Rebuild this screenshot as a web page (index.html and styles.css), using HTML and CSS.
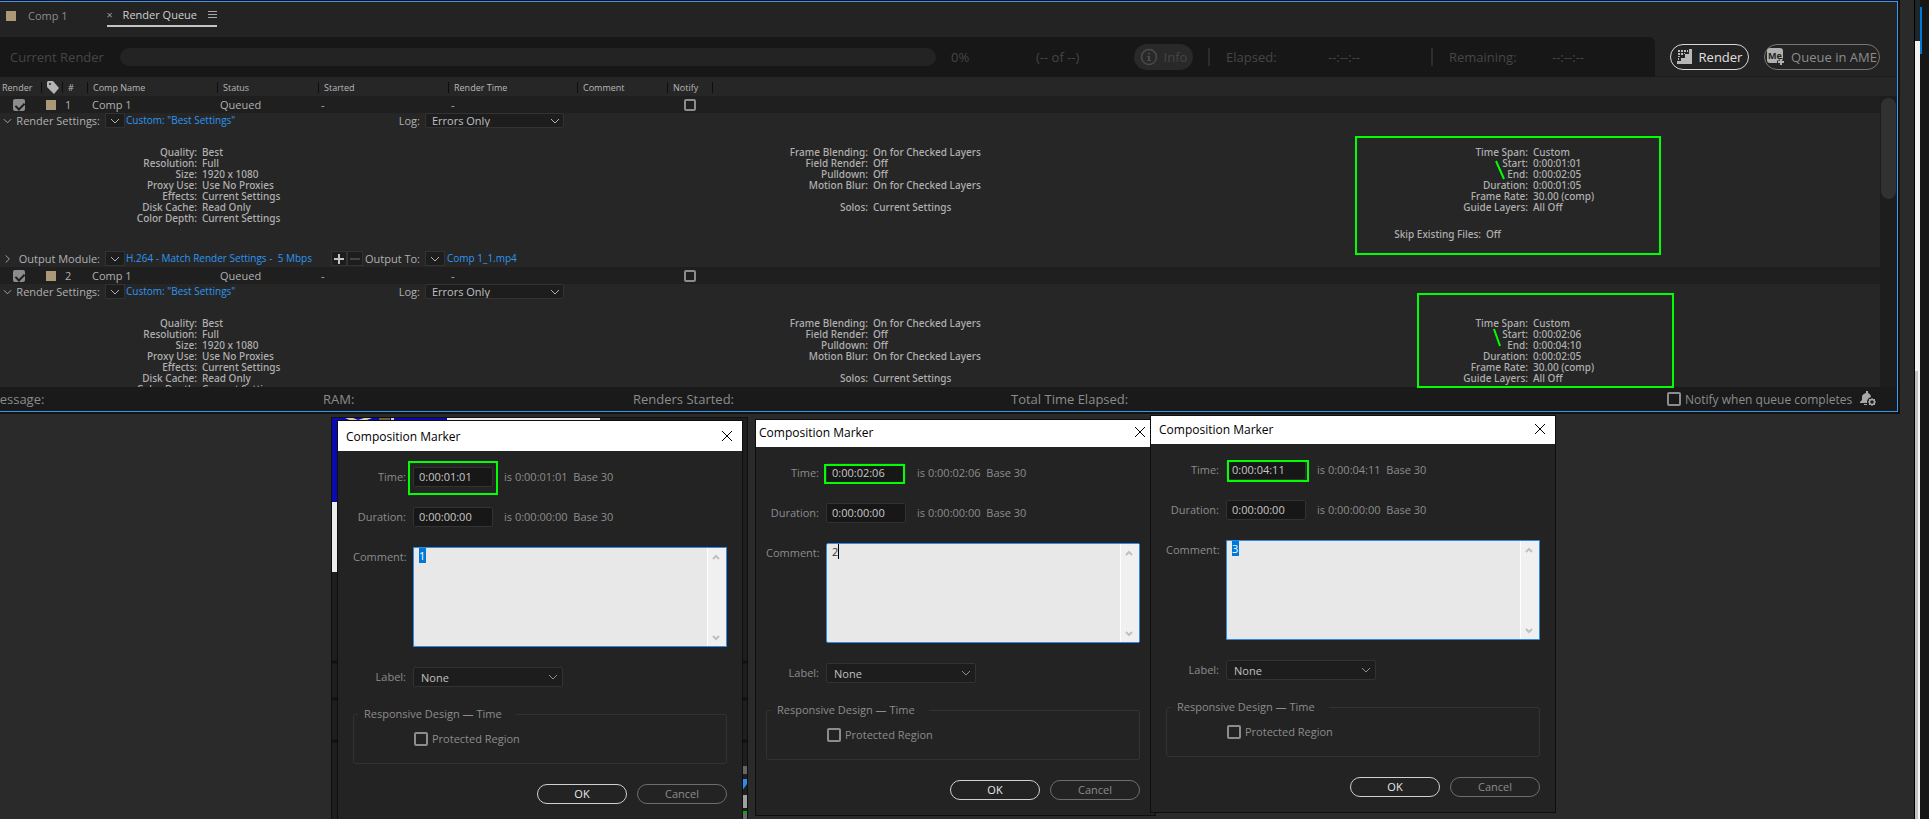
FILE: index.html
```
<!DOCTYPE html>
<html lang="en">
<head>
  <meta charset="UTF-8" />
  <meta name="viewport" content="width=device-width, initial-scale=1.0" />
  <title>Render Queue</title>
  <link rel="stylesheet" href="styles.css">
</head>
<body>
  <svg class="symbols" aria-hidden="true">
    <symbol id="chevron" viewBox="0 0 10 6"><path d="M1 1l4 4 4-4" fill="none" stroke="currentColor"/></symbol>
    <symbol id="close" viewBox="0 0 12 12"><path d="M1 1l10 10M11 1L1 11" fill="none" stroke="currentColor"/></symbol>
    <symbol id="scroll-arrow" viewBox="0 0 8 6"><path d="M1 5l3-3 3 3" fill="none" stroke="currentColor" stroke-width="2"/></symbol>
  </svg>

  <div class="workspace">
    <main class="panel">
      <nav class="tabs">
        <a href="#" class="tab"><span class="swatch"></span>Comp 1</a>
        <a href="#" class="tab active">
          <span class="tab-close">×</span>Render Queue
          <svg class="menu-icon" width="9" height="9"><path d="M0 1.500h9M0 4.500h9M0 7.500h9" stroke="#a8a8a8"/></svg>
        </a>
      </nav>

      <div class="render-bar">
        <div class="status">
          <span class="status-title">Current Render</span>
          <div class="progress"></div>
          <span class="percent">0%</span>
          <span class="count">(-- of --)</span>
          <button class="info-btn" disabled>
            <svg width="18" height="18"><circle cx="9" cy="9" r="7.500" fill="none" stroke="#4b4b4b" stroke-width="1.500"/><path d="M8 5h2v1.500H8zM7 8h3v4h1v1H7v-1h1V9H7z" fill="#4b4b4b"/></svg>
            Info
          </button>
          <span class="elapsed">Elapsed:</span>
          <span class="clock">--:--:--</span>
          <span class="remaining">Remaining:</span>
          <span class="clock last">--:--:--</span>
        </div>
        <button class="pill render-btn">
          <svg width="16" height="16" viewBox="0 0 16 16" fill="#b8b8b8"><path d="M12 0h3v15H0v-3h4V9h4V5h4z"/><path d="M1 1h2v2H1zM4 1h2v2H4zM7 1h2v2H7zM10 1h1v2h-1zM1 4h2v2H1zM4 4h2v2H4zM7 4h1v1H7zM1 7h2v1H1zM1 9h1v2H1z"/></svg>
          Render
        </button>
        <button class="pill ame-btn">
          <svg width="18" height="18" viewBox="0 0 18 18"><rect width="16" height="15" rx="3" fill="#b0b0b0"/><text x="1" y="11" class="me-text">Me</text><path d="M14 10v8M10 14h8" stroke="#232323" stroke-width="3"/><path d="M14 11v6M11 14h6" stroke="#b0b0b0" stroke-width="2"/></svg>
          Queue in AME
        </button>
      </div>

      <table class="queue-head">
        <colgroup><col class="c-render"><col class="c-tag"><col class="c-num"><col class="c-name"><col class="c-status"><col class="c-started"><col class="c-time"><col class="c-comment"><col class="c-notify"><col></colgroup>
        <thead>
          <tr>
            <th>Render</th>
            <th><svg width="12" height="13" viewBox="0 0 12 13"><path d="M0 1l1-1h5l6 7-5 6L0 6zM3 2a1 1 0 100 2 1 1 0 000-2z" fill="#b4b4b4" fill-rule="evenodd"/></svg></th>
            <th>#</th>
            <th>Comp Name</th>
            <th>Status</th>
            <th>Started</th>
            <th>Render Time</th>
            <th>Comment</th>
            <th>Notify</th>
            <th></th>
          </tr>
        </thead>
      </table>

      <div class="queue-scroll">
        <div class="queue-list">
          <!-- item 1 -->
          <table class="queue-item">
            <colgroup><col class="c-render"><col class="c-tag"><col class="c-num"><col class="c-name"><col class="c-status"><col class="c-started"><col class="c-time"><col class="c-comment"><col class="c-notify"><col></colgroup>
            <tr>
              <td><input type="checkbox" class="check render-check" aria-label="Render" checked></td>
              <td><span class="swatch"></span></td>
              <td>1</td>
              <td>Comp 1</td>
              <td>Queued</td>
              <td>-</td>
              <td>-</td>
              <td></td>
              <td><input type="checkbox" class="check notify-check" aria-label="Notify"></td>
              <td></td>
            </tr>
          </table>
          <div class="line">
            <button class="twisty" aria-label="Collapse"><svg width="9" height="6"><use href="#chevron"/></svg></button>
            <span class="line-label">Render Settings:</span>
            <button class="drop" aria-label="Render settings templates"><svg width="10" height="6"><use href="#chevron"/></svg></button>
            <a href="#">Custom: "Best Settings"</a>
            <label class="line-label log-label" for="log1">Log:</label>
            <div class="select"><select id="log1"><option>Errors Only</option></select><svg width="10" height="6"><use href="#chevron"/></svg></div>
          </div>
          <div class="details">
            <dl>
              <dt>Quality:</dt><dd>Best</dd>
              <dt>Resolution:</dt><dd>Full</dd>
              <dt>Size:</dt><dd>1920 x 1080</dd>
              <dt>Proxy Use:</dt><dd>Use No Proxies</dd>
              <dt>Effects:</dt><dd>Current Settings</dd>
              <dt>Disk Cache:</dt><dd>Read Only</dd>
              <dt>Color Depth:</dt><dd>Current Settings</dd>
            </dl>
            <dl>
              <dt>Frame Blending:</dt><dd>On for Checked Layers</dd>
              <dt>Field Render:</dt><dd>Off</dd>
              <dt>Pulldown:</dt><dd>Off</dd>
              <dt>Motion Blur:</dt><dd>On for Checked Layers</dd>
              <dt class="after-gap">Solos:</dt><dd class="after-gap">Current Settings</dd>
            </dl>
            <div>
              <dl>
                <dt>Time Span:</dt><dd>Custom</dd>
                <dt>Start:</dt><dd>0:00:01:01</dd>
                <dt>End:</dt><dd>0:00:02:05</dd>
                <dt>Duration:</dt><dd>0:00:01:05</dd>
                <dt>Frame Rate:</dt><dd>30.00 (comp)</dd>
                <dt>Guide Layers:</dt><dd>All Off</dd>
              </dl>
              <dl class="skip"><dt>Skip Existing Files:</dt><dd>Off</dd></dl>
            </div>
          </div>
          <div class="line">
            <button class="twisty closed" aria-label="Expand"><svg width="9" height="6"><use href="#chevron"/></svg></button>
            <span class="line-label">Output Module:</span>
            <button class="drop" aria-label="Output module templates"><svg width="10" height="6"><use href="#chevron"/></svg></button>
            <a href="#">H.264 - Match Render Settings -&nbsp; 5 Mbps</a>
            <div class="add-remove">
              <button aria-label="Add output module"><svg width="10" height="10"><path d="M5 0v10M0 5h10" stroke="#c4c4c4" stroke-width="2"/></svg></button>
              <button aria-label="Remove output module"><svg width="10" height="10"><path d="M0 5h10" stroke="#444" stroke-width="2"/></svg></button>
            </div>
            <span class="line-label">Output To:</span>
            <div class="output-to">
              <button class="drop" aria-label="Output name templates"><svg width="10" height="6"><use href="#chevron"/></svg></button>
              <a href="#">Comp 1_1.mp4</a>
            </div>
          </div>

          <!-- item 2 -->
          <table class="queue-item">
            <colgroup><col class="c-render"><col class="c-tag"><col class="c-num"><col class="c-name"><col class="c-status"><col class="c-started"><col class="c-time"><col class="c-comment"><col class="c-notify"><col></colgroup>
            <tr>
              <td><input type="checkbox" class="check render-check" aria-label="Render" checked></td>
              <td><span class="swatch"></span></td>
              <td>2</td>
              <td>Comp 1</td>
              <td>Queued</td>
              <td>-</td>
              <td>-</td>
              <td></td>
              <td><input type="checkbox" class="check notify-check" aria-label="Notify"></td>
              <td></td>
            </tr>
          </table>
          <div class="line">
            <button class="twisty" aria-label="Collapse"><svg width="9" height="6"><use href="#chevron"/></svg></button>
            <span class="line-label">Render Settings:</span>
            <button class="drop" aria-label="Render settings templates"><svg width="10" height="6"><use href="#chevron"/></svg></button>
            <a href="#">Custom: "Best Settings"</a>
            <label class="line-label log-label" for="log2">Log:</label>
            <div class="select"><select id="log2"><option>Errors Only</option></select><svg width="10" height="6"><use href="#chevron"/></svg></div>
          </div>
          <div class="details">
            <dl>
              <dt>Quality:</dt><dd>Best</dd>
              <dt>Resolution:</dt><dd>Full</dd>
              <dt>Size:</dt><dd>1920 x 1080</dd>
              <dt>Proxy Use:</dt><dd>Use No Proxies</dd>
              <dt>Effects:</dt><dd>Current Settings</dd>
              <dt>Disk Cache:</dt><dd>Read Only</dd>
              <dt>Color Depth:</dt><dd>Current Settings</dd>
            </dl>
            <dl>
              <dt>Frame Blending:</dt><dd>On for Checked Layers</dd>
              <dt>Field Render:</dt><dd>Off</dd>
              <dt>Pulldown:</dt><dd>Off</dd>
              <dt>Motion Blur:</dt><dd>On for Checked Layers</dd>
              <dt class="after-gap">Solos:</dt><dd class="after-gap">Current Settings</dd>
            </dl>
            <dl>
              <dt>Time Span:</dt><dd>Custom</dd>
              <dt>Start:</dt><dd>0:00:02:06</dd>
              <dt>End:</dt><dd>0:00:04:10</dd>
              <dt>Duration:</dt><dd>0:00:02:05</dd>
              <dt>Frame Rate:</dt><dd>30.00 (comp)</dd>
              <dt>Guide Layers:</dt><dd>All Off</dd>
            </dl>
          </div>
        </div>
        <div class="scrollbar"><div class="thumb"></div></div>
      </div>

      <footer class="summary">
        <span>Message:</span>
        <span>RAM:</span>
        <span>Renders Started:</span>
        <span>Total Time Elapsed:</span>
        <div class="notify">
          <input type="checkbox" class="check" id="notifyAll"><label for="notifyAll">Notify when queue completes</label>
          <svg width="17" height="16" viewBox="0 0 17 16"><path d="M6 0h2v2c2 1 3 2 3 5l-2 2v3H0v-1l2-2V6c0-2 1-3 4-4zM4 13h3v1H4z" fill="#a8a8a8"/><circle cx="12" cy="11" r="5" fill="#1a1a1a"/><circle cx="12" cy="11" r="2.500" fill="none" stroke="#a8a8a8" stroke-width="1.500"/><path d="M12 7v1M12 14v1M8 11h1M15 11h1M9 8l1 1M14 13l1 1M15 8l-1 1M10 13l-1 1" stroke="#a8a8a8"/></svg>
        </div>
      </footer>
    </main>

    <!-- viewer and timeline peeking out behind the dialogs -->
    <svg class="backdrop" width="820" height="407">
      <rect x="0" y="4" width="417" height="403" fill="#0e0e0e"/>
      <rect x="1" y="5" width="415" height="402" fill="#1e1e1e"/>
      <path d="M1 5h115v5H6v79H1z" fill="#0a0ab4"/>
      <path d="M14 5h8l5 2 6-2h8l-10 4h-8zM60 5h3v4h-3z" fill="#d8d0b8"/>
      <path d="M48 5h11v4H48z" fill="#6b6040"/>
      <path d="M116 5h153v4H116zM1 89h5v70H1z" fill="#ececec"/>
      <path d="M1 249h415M1 286h415M1 328h415" stroke="#111" stroke-width="3"/>
      <path d="M411 353h5v8h-5z" fill="#666"/>
      <path d="M411 366h5v5l-5 7z" fill="#2d8ceb"/>
      <path d="M411 382h5v13h-5z" fill="#a0a0a0"/>
      <path d="M411 398h5v3h-5z" fill="#13a313"/>
      <path d="M411 401h5v6h-5z" fill="#667"/>
    </svg>

    <section class="window window-one">
      <div class="window-body">
        <header class="titlebar"><h2>Composition Marker</h2><button aria-label="Close"><svg width="12" height="12"><use href="#close"/></svg></button></header>
        <form class="marker-form">
          <label for="time1">Time:</label>
          <div class="field"><input type="text" id="time1" value="0:00:01:01"><span>is 0:00:01:01&nbsp; Base 30</span></div>
          <label for="duration1">Duration:</label>
          <div class="field"><input type="text" id="duration1" value="0:00:00:00"><span>is 0:00:00:00&nbsp; Base 30</span></div>
          <label for="comment1">Comment:</label>
          <div class="comment selected"><textarea id="comment1">1</textarea><div class="arrows"><svg width="8" height="6"><use href="#scroll-arrow"/></svg><svg width="8" height="6"><use href="#scroll-arrow"/></svg></div></div>
          <label for="label1">Label:</label>
          <div class="select"><select id="label1"><option>None</option></select><svg width="10" height="6"><use href="#chevron"/></svg></div>
          <fieldset>
            <legend>Responsive Design — Time</legend>
            <input type="checkbox" class="check" id="protected1"><label for="protected1">Protected Region</label>
          </fieldset>
          <div class="actions"><button type="button" class="ok">OK</button><button type="button">Cancel</button></div>
        </form>
      </div>
    </section>

    <section class="window window-two">
      <div class="window-body">
        <header class="titlebar"><h2>Composition Marker</h2><button aria-label="Close"><svg width="12" height="12"><use href="#close"/></svg></button></header>
        <form class="marker-form">
          <label for="time2">Time:</label>
          <div class="field"><input type="text" id="time2" value="0:00:02:06"><span>is 0:00:02:06&nbsp; Base 30</span></div>
          <label for="duration2">Duration:</label>
          <div class="field"><input type="text" id="duration2" value="0:00:00:00"><span>is 0:00:00:00&nbsp; Base 30</span></div>
          <label for="comment2">Comment:</label>
          <div class="comment caret"><textarea id="comment2">2</textarea><div class="arrows"><svg width="8" height="6"><use href="#scroll-arrow"/></svg><svg width="8" height="6"><use href="#scroll-arrow"/></svg></div></div>
          <label for="label2">Label:</label>
          <div class="select"><select id="label2"><option>None</option></select><svg width="10" height="6"><use href="#chevron"/></svg></div>
          <fieldset>
            <legend>Responsive Design — Time</legend>
            <input type="checkbox" class="check" id="protected2"><label for="protected2">Protected Region</label>
          </fieldset>
          <div class="actions"><button type="button" class="ok">OK</button><button type="button">Cancel</button></div>
        </form>
      </div>
    </section>

    <section class="window window-three">
      <div class="window-body">
        <header class="titlebar"><h2>Composition Marker</h2><button aria-label="Close"><svg width="12" height="12"><use href="#close"/></svg></button></header>
        <form class="marker-form">
          <label for="time3">Time:</label>
          <div class="field"><input type="text" id="time3" value="0:00:04:11"><span>is 0:00:04:11&nbsp; Base 30</span></div>
          <label for="duration3">Duration:</label>
          <div class="field"><input type="text" id="duration3" value="0:00:00:00"><span>is 0:00:00:00&nbsp; Base 30</span></div>
          <label for="comment3">Comment:</label>
          <div class="comment selected"><textarea id="comment3">3</textarea><div class="arrows"><svg width="8" height="6"><use href="#scroll-arrow"/></svg><svg width="8" height="6"><use href="#scroll-arrow"/></svg></div></div>
          <label for="label3">Label:</label>
          <div class="select"><select id="label3"><option>None</option></select><svg width="10" height="6"><use href="#chevron"/></svg></div>
          <fieldset>
            <legend>Responsive Design — Time</legend>
            <input type="checkbox" class="check" id="protected3"><label for="protected3">Protected Region</label>
          </fieldset>
          <div class="actions"><button type="button" class="ok">OK</button><button type="button">Cancel</button></div>
        </form>
      </div>
    </section>

    <!-- green highlight marks -->
    <svg class="marks" fill="none" stroke="#00ff00" stroke-width="2">
      <rect x="1356" y="137" width="304" height="117"/>
      <rect x="1418" y="294" width="255" height="93"/>
      <path d="M1496 161l8 18M1494 329l6 17"/>
      <rect x="409" y="462" width="88" height="32"/>
      <rect x="825" y="465" width="79" height="18"/>
      <rect x="1228" y="461" width="80" height="20"/>
    </svg>
  </div>

  <aside class="edge"><div class="edge-scroll"></div><div class="edge-accent"></div></aside>
</body>
</html>
```
FILE: styles.css
```
* {
  box-sizing: border-box;
}

body {
  margin: 0;
  display: flex;
  height: 100vh;
  overflow: hidden;
  background-color: #2a2a2a;
  color: #b0b0b0;
  font-family: "Open Sans", "Noto Sans", sans-serif;
  font-size: 11px;
}

button, input, select, textarea {
  margin: 0;
  font: inherit;
  color: inherit;
}

button {
  display: flex;
  align-items: center;
  justify-content: center;
  padding: 0;
  background: none;
  border: none;
}

a {
  color: #2d96f0;
  text-decoration: none;
}

svg {
  flex: none;
}

.symbols {
  position: absolute;
  width: 0;
  height: 0;
}

.workspace {
  position: relative;
  flex: 1;
  min-width: 0;
  background-color: #2a2a2a;
}

/* render queue panel */
.panel {
  margin: 1px 16px 0 0;
  background-color: #232323;
  border: 1px solid #3a96ee;
  border-left: none;
  box-shadow: 0 0 0 2px #121212;
}

.tabs {
  display: flex;
  gap: 39px;
  height: 35px;
  padding: 2px 0 0 6px;
}

.tab {
  display: flex;
  align-items: center;
  gap: 12px;
  height: 23px;
  color: #8c8c8c;
}

.tab.active {
  gap: 11px;
  color: #d0d0d0;
  border-bottom: 2px solid #c4c4c4;
}

.tab-close {
  width: 5px;
  color: #9a9a9a;
}

.swatch {
  display: block;
  width: 10px;
  height: 10px;
  background-color: #ab9877;
}

.render-bar {
  display: flex;
  align-items: center;
  height: 40px;
  padding-right: 17px;
  border-bottom: 1px solid #1c1c1c;
  font-size: 13px;
}

.status {
  display: flex;
  flex: 1;
  align-items: center;
  height: 40px;
  padding-left: 10px;
  background-color: #171717;
  border-radius: 0 6px 0 0;
  color: #464646;
  font-weight: 500;
}

.status-title {
  width: 110px;
}

.progress {
  flex: 1;
  height: 18px;
  border-radius: 9px;
  background-color: #232323;
}

.percent {
  width: 100px;
  padding-left: 15px;
}

.count {
  width: 98px;
}

.info-btn {
  gap: 6px;
  width: 59px;
  height: 26px;
  border-radius: 13px;
  background-color: #292929;
  color: #464646;
}

.elapsed, .remaining {
  height: 18px;
  padding-left: 16px;
  border-left: 2px solid #2c2c2c;
  line-height: 18px;
}

.elapsed {
  width: 120px;
  margin-left: 15px;
}

.remaining {
  width: 121px;
}

.clock {
  width: 103px;
}

.pill {
  gap: 6px;
  height: 26px;
  margin-left: 15px;
  border: 1px solid #767676;
  border-radius: 13px;
}

.render-btn {
  width: 79px;
  border-color: #d8d8d8;
  color: #e0e0e0;
}

.ame-btn {
  width: 116px;
  color: #8c8c8c;
}

.me-text {
  fill: #232323;
  font-size: 9px;
  font-weight: bold;
}

/* queue tables */
.queue-head, .queue-item {
  width: 100%;
  table-layout: fixed;
  border-collapse: collapse;
}

.c-render { width: 41px; }
.c-tag { width: 21px; }
.c-num { width: 25px; }
.c-name { width: 130px; }
.c-status { width: 101px; }
.c-started { width: 130px; }
.c-time { width: 129px; }
.c-comment { width: 90px; }
.c-notify { width: 45px; }

.queue-head {
  height: 19px;
  background-color: #262626;
}

.queue-head th {
  height: 19px;
  padding: 2px 0 0 6px;
  background: linear-gradient(#0e0e0e, #0e0e0e) no-repeat 0 5px / 1px 11px;
  color: #b8b8b8;
  font-size: 9px;
  font-weight: normal;
  line-height: 14px;
  text-align: left;
  white-space: nowrap;
}

.queue-head th:first-child {
  padding-left: 2px;
  background: none;
}

.queue-head svg {
  display: block;
}

.queue-scroll {
  display: flex;
  height: 291px;
  background-color: #1d1d1d;
}

.queue-list {
  flex: 1;
  overflow: hidden;
  background-color: #262626;
}

.queue-item {
  background-color: #1f1f1f;
}

.queue-item td {
  height: 17px;
  padding: 0 0 0 3px;
  line-height: 15px;
}

.queue-item td:nth-child(2), .queue-item td:nth-child(4) {
  padding-left: 5px;
}

.check {
  appearance: none;
  display: block;
  width: 14px;
  height: 14px;
  border: 2px solid #8c8c8c;
  border-radius: 2px;
}

.render-check, .notify-check {
  width: 12px;
  height: 12px;
}

.render-check {
  position: relative;
  margin-left: 10px;
  background-color: #8c8c8c;
}

.render-check::after {
  content: "";
  position: absolute;
  top: 0;
  left: 2px;
  width: 4px;
  height: 7px;
  border: solid #1d1d1d;
  border-width: 0 2px 2px 0;
  transform: rotate(45deg);
}

.notify-check {
  margin-left: 14px;
}

.line {
  display: grid;
  grid-template-columns: 15px 85px 5px 20px 1px 205px 32px 57px 5px 139px;
  height: 16px;
  line-height: 15px;
  white-space: nowrap;
}

.line > :nth-child(3) { grid-column: 4; }
.line > :nth-child(4) { grid-column: 6; }
.line > :nth-child(6) { grid-column: 8; }
.line > :last-child { grid-column: 10; }
.line > .log-label { grid-column: 8; }

.line a {
  font-size: 10px;
  font-weight: 500;
  line-height: 14px;
}

.line-label {
  text-align: right;
}

.twisty.closed svg {
  transform: rotate(-90deg);
}

.drop {
  width: 20px;
  height: 15px;
  border: 1px solid #323232;
  background-color: #1d1d1d;
}

.add-remove {
  display: flex;
}

.add-remove button {
  width: 16px;
  height: 15px;
  border: 1px solid #323232;
  background-color: #1d1d1d;
}

.output-to {
  display: flex;
  gap: 2px;
}

.select {
  position: relative;
  height: 15px;
}

.select select {
  appearance: none;
  display: block;
  width: 100%;
  height: 100%;
  padding: 0 7px;
  background-color: #1d1d1d;
  border: 1px solid #323232;
  border-radius: 2px;
  color: #c0c0c0;
}

.line select {
  padding: 0 6px;
  line-height: 13px;
}

.select svg {
  position: absolute;
  top: calc(50% - 3px);
  right: 4px;
  pointer-events: none;
}

.details {
  display: grid;
  grid-template-columns: 671fr 660fr 549fr;
  padding: 18px 0 11px;
  font-family: "Noto Sans", "Open Sans", sans-serif;
  font-size: 10px;
  font-weight: 500;
}

.details dl {
  display: grid;
  grid-template-columns: 197px auto;
  grid-auto-rows: 11px;
  align-content: start;
  column-gap: 5px;
  margin: 0;
  line-height: 11px;
}

.details dt {
  text-align: right;
}

.details dd {
  margin: 0;
}

.details .after-gap {
  grid-row: 6;
}

.details .skip {
  grid-template-columns: 150px auto;
  margin-top: 16px;
}

.scrollbar {
  width: 17px;
  padding: 2px 1px;
}

.thumb {
  height: 101px;
  border-radius: 8px;
  background-color: #313131;
}

.summary {
  display: grid;
  grid-template-columns: 323fr 310fr 378fr 656fr 211px;
  align-items: center;
  height: 24px;
  padding-right: 19px;
  background-color: #1a1a1a;
  font-size: 13px;
  font-weight: 500;
  color: #8c8c8c;
  overflow: hidden;
}

.summary span:first-child {
  margin-left: -12px;
}

.notify {
  display: flex;
  align-items: center;
  gap: 4px;
  font-size: 12px;
  white-space: nowrap;
}

.notify svg {
  margin-left: 4px;
}

/* marker dialogs */
.backdrop {
  position: absolute;
  top: 413px;
  left: 331px;
}

.window {
  position: absolute;
  overflow: hidden;
  background-color: #232323;
  box-shadow: 0 0 0 1px #0e0e0e;
}

.window-one {
  top: 421px;
  left: 338px;
}

.window-two {
  top: 420px;
  left: 756px;
}

.window-three {
  top: 416px;
  left: 1151px;
}

.window-two .window-body {
  margin: -3px 0 0 -5px;
}

.window-three .window-body {
  margin-top: -2px;
}

.window-body {
  width: 404px;
}

.titlebar {
  display: flex;
  align-items: center;
  justify-content: space-between;
  height: 30px;
  padding: 0 9px 0 8px;
  background-color: #fff;
  color: #000;
}

.titlebar h2 {
  margin: 0;
  font-size: 12px;
  font-weight: normal;
}

.marker-form {
  display: grid;
  grid-template-columns: 53px auto;
  column-gap: 7px;
  row-gap: 20px;
  padding: 16px 15px 15px;
  color: #8c8c8c;
  line-height: 20px;
  white-space: nowrap;
}

.marker-form > label {
  text-align: right;
}

.field {
  display: flex;
  gap: 11px;
}

.field input {
  width: 80px;
  height: 20px;
  padding: 0 5px;
  border: 1px solid #323232;
  border-radius: 2px;
  background-color: #171717;
  color: #c8c8c8;
}

.comment {
  position: relative;
  height: 100px;
}

.comment textarea {
  position: relative;
  display: block;
  width: 100%;
  height: 100%;
  padding: 0 22px 0 5px;
  border: 1px solid #2d8ceb;
  border-radius: 2px;
  background-color: #e8e8e8;
  color: #333;
  line-height: 16px;
  resize: none;
  overflow: hidden;
}

/* highlighted text and caret */
.comment.selected {
  border-radius: 2px;
  background: linear-gradient(#0078d7, #0078d7) no-repeat 6px 1px / 7px 15px, #e8e8e8;
}

.comment.selected textarea {
  background: none;
  color: #fff;
}

.comment.caret::after {
  content: "";
  position: absolute;
  top: 1px;
  left: 12px;
  width: 1px;
  height: 15px;
  background-color: #000;
}

.arrows {
  position: absolute;
  top: 1px;
  right: 1px;
  bottom: 1px;
  display: flex;
  flex-direction: column;
  justify-content: space-between;
  align-items: center;
  width: 19px;
  padding: 6px 3px 5px 0;
  border-left: 1px solid #fff;
  background-color: #f0f0f0;
  color: #c0c0c0;
}

.arrows svg:last-child {
  transform: rotate(180deg);
}

.marker-form .select {
  width: 150px;
  height: 20px;
}

.marker-form .select svg {
  right: 5px;
}

fieldset {
  grid-column: 1 / -1;
  display: flex;
  gap: 4px;
  height: 57px;
  margin: 0;
  padding: 11px 0 0 60px;
  border: 1px solid #323232;
  border-radius: 2px;
  line-height: 14px;
}

legend {
  margin-left: -56px;
  padding: 0 14px 0 6px;
}

.actions {
  grid-column: 1 / -1;
  display: flex;
  justify-content: flex-end;
  gap: 10px;
}

.actions button {
  width: 90px;
  height: 20px;
  border: 1px solid #6e6e6e;
  border-radius: 10px;
}

.actions .ok {
  border-color: #d0d0d0;
  color: #e8e8e8;
}

.marks {
  position: absolute;
  top: 0;
  left: 0;
  width: 100%;
  height: 100%;
  pointer-events: none;
}

/* neighbouring window at the right */
.edge {
  display: flex;
  align-items: flex-start;
  width: 15px;
  background-color: #161616;
  border-left: 1px solid #000;
}

.edge-scroll {
  width: 5px;
  height: 100%;
  background: linear-gradient(90deg, #c2c2c2 3px, #f2f2f2 3px) no-repeat 0 371px, linear-gradient(#1d262b 41px, #f2f2f2 41px);
}

.edge-accent {
  width: 2px;
  height: 47px;
  margin-top: 7px;
  background-color: #0078d7;
}
```
